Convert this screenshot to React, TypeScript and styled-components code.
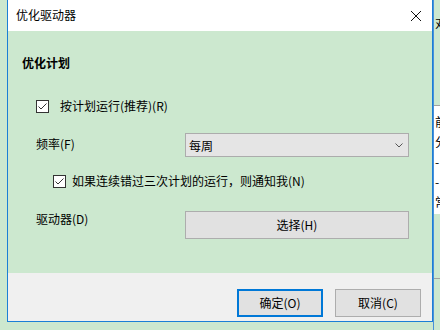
import React from 'react';
import styled, { createGlobalStyle } from 'styled-components';

const GlobalStyle = createGlobalStyle`
  html, body {
    margin: 0;
    padding: 0;
    background: #cce8cf;
  }
  #root {
    width: 440px;
    height: 330px;
    overflow: hidden;
  }
`;

const Desktop = styled.div`
  display: flex;
  width: 440px;
  height: 330px;
  padding-left: 7px;
  box-sizing: border-box;
  background-color: #cce8cf;
  font-family: 'Noto Sans CJK SC', 'Microsoft YaHei', sans-serif;
  font-size: 12px;
  color: #000;
`;

const Dialog = styled.div`
  display: flex;
  flex-direction: column;
  width: 426px;
  height: 322px;
  box-sizing: border-box;
  border: 1px solid #1b7fd6;
  border-top: none;
`;

const TitleBar = styled.div`
  display: flex;
  align-items: center;
  justify-content: space-between;
  height: 31px;
  flex: none;
  padding: 0 10px 1px 8px;
  box-sizing: border-box;
  background-color: #fff;
`;

const Title = styled.span`
  line-height: 16px;
`;

const CloseButton = styled.span`
  display: flex;
  width: 12px;
  height: 12px;
  margin-top: 1px;
`;

const Body = styled.div`
  flex: 1;
  display: flex;
  flex-direction: column;
  padding: 24px 0 0 14px;
  background-color: #cce8cf;
`;

const SectionTitle = styled.div`
  font-weight: bold;
  line-height: 16px;
`;

const CheckRow = styled.label<{ $top: number; $indent?: number; $gap: number }>`
  display: flex;
  align-items: center;
  gap: ${({ $gap }) => $gap}px;
  height: 16px;
  margin: ${({ $top }) => $top}px 0 0 ${({ $indent = 0 }) => 14 + $indent}px;
  line-height: 16px;
`;

const CheckBox = styled.span`
  display: flex;
  align-items: center;
  justify-content: center;
  width: 13px;
  height: 13px;
  box-sizing: border-box;
  border: 1px solid #333;
  background-color: #fff;
`;

const FieldRow = styled.div<{ $top: number }>`
  display: grid;
  grid-template-columns: 149px 224px;
  align-items: start;
  margin: ${({ $top }) => $top}px 0 0 14px;
`;

const FieldLabel = styled.span<{ $offset: number }>`
  line-height: 16px;
  padding-top: ${({ $offset }) => $offset}px;
`;

const Select = styled.div`
  display: flex;
  align-items: center;
  justify-content: space-between;
  height: 24px;
  padding: 0 5px 0 3px;
  box-sizing: border-box;
  border: 1px solid #acacac;
  background-color: #e5e5e5;
`;

const Button = styled.button<{ $primary?: boolean }>`
  height: 28px;
  padding: 0;
  box-sizing: border-box;
  border: ${({ $primary }) => ($primary ? '2px solid #0078d7' : '1px solid #adadad')};
  background-color: #e1e1e1;
  font: inherit;
  color: #000;
  line-height: 16px;
`;

const Footer = styled.div`
  display: flex;
  justify-content: flex-end;
  gap: 12px;
  height: 48px;
  flex: none;
  padding: 16px 11px 0 0;
  box-sizing: border-box;
  background-color: #f0f0f0;
`;

const FooterButton = styled(Button)`
  width: 86px;
`;

/* the window behind the dialog, only a sliver shows at the right edge */
const BackWindow = styled.div`
  flex: 1;
  display: flex;
  flex-direction: column;
  overflow: hidden;
  white-space: nowrap;
  border-left: 1px solid #4a90d9;
`;

const BackHead = styled.div`
  height: 106px;
  padding: 15px 0 0 1px;
  box-sizing: border-box;
  line-height: 16px;
  border-bottom: 1px solid #a0a0a0;
`;

const BackList = styled.div`
  display: flex;
  flex-direction: column;
  height: 108px;
  padding: 6px 0 0 1px;
  box-sizing: border-box;
  background-color: #fff;
  line-height: 20px;
`;

const BackTail = styled.div`
  height: 64px;
  border-bottom: 1px solid #a0a0a0;
`;

const Check = () => (
  <CheckBox>
    <svg width="9" height="7" viewBox="0 0 9 7">
      <polyline points="0.5,3.5 3,6 8.5,0.5" fill="none" stroke="#333" strokeWidth="1" />
    </svg>
  </CheckBox>
);

export default function App() {
  return (
    <>
      <GlobalStyle />
      <Desktop>
        <Dialog>
          <TitleBar>
            <Title>优化驱动器</Title>
            <CloseButton>
              <svg width="12" height="12" viewBox="0 0 12 12">
                <path d="M1 1 L11 11 M11 1 L1 11" stroke="#111" strokeWidth="1" />
              </svg>
            </CloseButton>
          </TitleBar>
          <Body>
            <SectionTitle>优化计划</SectionTitle>
            <CheckRow $top={27} $gap={11}>
              <Check />
              按计划运行(推荐)(R)
            </CheckRow>
            <FieldRow $top={19}>
              <FieldLabel $offset={3}>频率(F)</FieldLabel>
              <Select>
                每周
                <svg width="8" height="5" viewBox="0 0 8 5">
                  <polyline points="0.5,0.5 4,4 7.5,0.5" fill="none" stroke="#555" strokeWidth="1" />
                </svg>
              </Select>
            </FieldRow>
            <CheckRow $top={16} $indent={17} $gap={6}>
              <Check />
              如果连续错过三次计划的运行，则通知我(N)
            </CheckRow>
            <FieldRow $top={22}>
              <FieldLabel $offset={0}>驱动器(D)</FieldLabel>
              <Button>选择(H)</Button>
            </FieldRow>
          </Body>
          <Footer>
            <FooterButton $primary>确定(O)</FooterButton>
            <FooterButton>取消(C)</FooterButton>
          </Footer>
        </Dialog>
        <BackWindow>
          <BackHead>对</BackHead>
          <BackList>
            <span>前</span>
            <span>分</span>
            <span>-</span>
            <span>-</span>
            <span>常</span>
          </BackList>
          <BackTail />
        </BackWindow>
      </Desktop>
    </>
  );
}
